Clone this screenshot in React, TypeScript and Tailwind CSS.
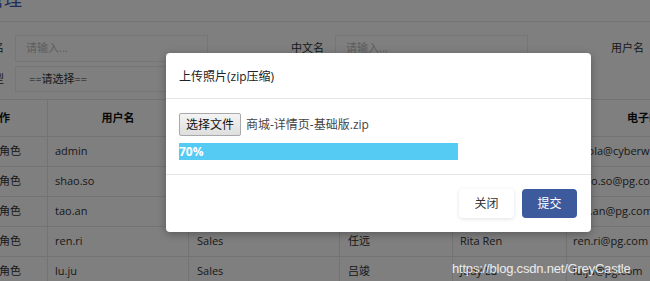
import React from "react";

const rows = [
  { user: "admin", dept: "Admin", cn: "管理员", en: "Admin", email: "jia.ola@cyberwisdom.net" },
  { user: "shao.so", dept: "Sales", cn: "邵硕", en: "Shao So", email: "shao.so@pg.com" },
  { user: "tao.an", dept: "Sales", cn: "陶安", en: "Tao An", email: "tao.an@pg.com" },
  { user: "ren.ri", dept: "Sales", cn: "任远", en: "Rita Ren", email: "ren.ri@pg.com" },
  { user: "lu.ju", dept: "Sales", cn: "吕竣", en: "Judy Lu", email: "lu.ju@pg.com" },
];

function Field({ label, children }: { label: string; children: React.ReactNode }) {
  return (
    <div className="flex w-[320px] shrink-0 items-center">
      <span className="w-[108px] shrink-0 text-right text-[11px] text-[#333]">{label}</span>
      <div className="ml-[11px] w-[193px] shrink-0">{children}</div>
    </div>
  );
}

export default function App() {
  return (
    <div
      className="relative h-[281px] w-[650px] overflow-hidden bg-white"
      style={{ fontFamily: '"Open Sans", "Noto Sans CJK SC", sans-serif' }}
    >
      {/* page under the dialog */}
      <div>
        <div className="flex h-[22px] items-start border-b border-[#e8e8e8]">
          <h1 className="-ml-[50px] -mt-[10px] text-[18px] leading-[18px] text-[#3a5cb8]">用户管理</h1>
        </div>

        <div className="-ml-[104px] flex flex-col gap-[4px] pt-[13px]">
          <div className="flex">
            <Field label="用户名">
              <div className="flex h-[27px] items-center border border-[#ececec] px-[10px] text-[11px] text-[#bbb]">请输入...</div>
            </Field>
            <Field label="中文名">
              <div className="flex h-[27px] items-center border border-[#ececec] px-[10px] text-[11px] text-[#bbb]">请输入...</div>
            </Field>
            <Field label="用户名">
              <div className="flex h-[27px] items-center border border-[#ececec] px-[10px] text-[11px] text-[#bbb]">请输入...</div>
            </Field>
          </div>
          <div className="flex">
            <Field label="类型">
              <div className="flex h-[26px] items-center border border-[#ececec] px-[13px] text-[11px] text-[#333]">==请选择==</div>
            </Field>
          </div>
        </div>

        <div className="-ml-[40px] mt-[7px]">
          <div className="grid grid-cols-[88px_141px_151px_113px_114px_164px] border-t border-[#e6e6e6] text-[11px] text-[#333]">
            <div className="flex h-[37px] items-center border-b border-r border-[#e6e6e6] pl-[28px] font-bold text-[#111]">操作</div>
            <div className="flex h-[37px] items-center justify-center border-b border-r border-[#e6e6e6] font-bold text-[#111]">用户名</div>
            <div className="flex h-[37px] items-center justify-center border-b border-r border-[#e6e6e6] font-bold text-[#111]">部门</div>
            <div className="flex h-[37px] items-center justify-center border-b border-r border-[#e6e6e6] font-bold text-[#111]">中文名</div>
            <div className="flex h-[37px] items-center justify-center border-b border-r border-[#e6e6e6] font-bold text-[#111]">英文名</div>
            <div className="flex h-[37px] items-center justify-center border-b border-[#e6e6e6] font-bold text-[#111]">电子邮件</div>
            {rows.map((r) => (
              <React.Fragment key={r.user}>
                <div className="flex h-[30px] items-center border-b border-r border-[#e6e6e6] pl-[17px]">分配角色</div>
                <div className="flex h-[30px] items-center border-b border-r border-[#e6e6e6] pl-[7px]">{r.user}</div>
                <div className="flex h-[30px] items-center border-b border-r border-[#e6e6e6] pl-[8px]">{r.dept}</div>
                <div className="flex h-[30px] items-center border-b border-r border-[#e6e6e6] pl-[8px]">{r.cn}</div>
                <div className="flex h-[30px] items-center border-b border-r border-[#e6e6e6] pl-[7px]">{r.en}</div>
                <div className="flex h-[30px] items-center border-b border-[#e6e6e6] pl-[6px]">{r.email}</div>
              </React.Fragment>
            ))}
          </div>
        </div>
      </div>

      {/* backdrop */}
      <div className="absolute inset-0 bg-black/50" />

      {/* upload dialog */}
      <div className="absolute left-[166px] top-[53px] w-[425px] rounded-[4px] bg-white shadow-[0_2px_8px_rgba(0,0,0,0.3)]">
        <div className="flex h-[46px] items-center border-b border-[#e5e5e5] px-[13px] pt-[2px] text-[12px] text-[#222]">
          上传照片(zip压缩)
        </div>
        <div className="border-b border-[#e5e5e5] px-[13px] py-[14px]">
          <div className="flex items-center">
            <button className="h-[23px] w-[62px] rounded-[2px] border border-[#a9a9a9] bg-gradient-to-b from-[#f4f4f4] to-[#dedede] text-[12px] text-[#111]">
              选择文件
            </button>
            <span className="ml-[5px] text-[12px] text-[#444]">商城-详情页-基础版.zip</span>
          </div>
          <div className="mt-[7px] w-full">
            <div className="flex h-[17px] w-[70%] items-center bg-[#55cbf4] text-[12px] font-bold text-white">70%</div>
          </div>
        </div>
        <div className="flex justify-end gap-[8px] px-[14px] py-[14px]">
          <button className="h-[29px] w-[55px] rounded-[4px] bg-white text-[12px] text-[#333] shadow-[0_1px_4px_rgba(0,0,0,0.12)]">
            关闭
          </button>
          <button className="h-[29px] w-[55px] rounded-[4px] bg-[#3d5a9c] text-[12px] text-white">提交</button>
        </div>
      </div>

      {/* image watermark */}
      <div
        className="absolute left-[452px] top-[259px] text-[13px] tracking-[-0.2px] text-white/85"
        style={{ fontFamily: '"Liberation Sans", Arial, sans-serif' }}
      >
        https://blog.csdn.net/GreyCastle
      </div>
    </div>
  );
}
